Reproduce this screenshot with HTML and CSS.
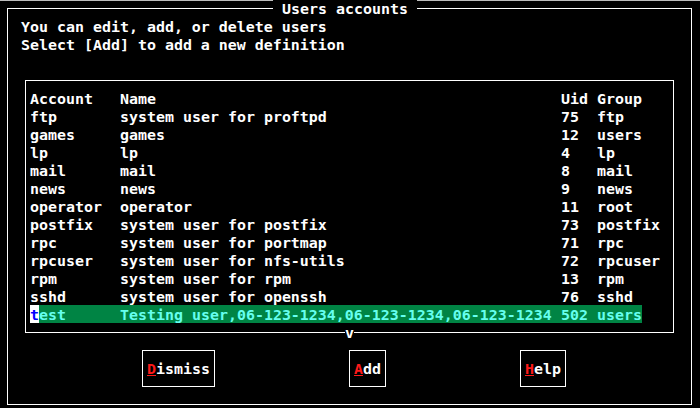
FILE: index.html
```html
<!DOCTYPE html>
<html>
<head>
<meta charset="utf-8">
<link rel="stylesheet" href="styles.css">
</head>
<body>
<div class="screen">
  <div class="frame">
    <div class="title-row"><span class="title"> Users accounts </span></div>
    <div class="intro">
      <div class="line">You can edit, add, or delete users</div>
      <div class="line">Select [Add] to add a new definition</div>
    </div>
    <div class="list-box">
      <div class="row"><span>Account</span><span>Name</span><span>Uid</span><span>Group</span></div>
      <div class="row"><span>ftp</span><span>system user for proftpd</span><span>75</span><span>ftp</span></div>
      <div class="row"><span>games</span><span>games</span><span>12</span><span>users</span></div>
      <div class="row"><span>lp</span><span>lp</span><span>4</span><span>lp</span></div>
      <div class="row"><span>mail</span><span>mail</span><span>8</span><span>mail</span></div>
      <div class="row"><span>news</span><span>news</span><span>9</span><span>news</span></div>
      <div class="row"><span>operator</span><span>operator</span><span>11</span><span>root</span></div>
      <div class="row"><span>postfix</span><span>system user for postfix</span><span>73</span><span>postfix</span></div>
      <div class="row"><span>rpc</span><span>system user for portmap</span><span>71</span><span>rpc</span></div>
      <div class="row"><span>rpcuser</span><span>system user for nfs-utils</span><span>72</span><span>rpcuser</span></div>
      <div class="row"><span>rpm</span><span>system user for rpm</span><span>13</span><span>rpm</span></div>
      <div class="row"><span>sshd</span><span>system user for openssh</span><span>76</span><span>sshd</span></div>
      <div class="row sel"><span><span class="cursor">t</span>est</span><span>Testing user,06-123-1234,06-123-1234,06-123-1234</span><span>502</span><span>users</span></div>
      <span class="more">v</span>
    </div>
    <div class="buttons">
      <div class="btn"><span class="key">D</span>ismiss</div>
      <div class="btn"><span class="key">A</span>dd</div>
      <div class="btn"><span class="key">H</span>elp</div>
    </div>
  </div>
</div>
</body>
</html>
```

FILE: styles.css
```css
html, body {
  margin: 0;
  padding: 0;
  background: #000;
}

body {
  width: 700px;
  height: 408px;
  overflow: hidden;
  color: #ffffff;
  font-family: "DejaVu Sans Mono", "Liberation Mono", monospace;
  font-weight: bold;
  font-size: 14.95px;
}

.screen {
  border-top: 1px solid #bcbcbc;
  padding: 7px 0 0 7px;
}

.frame {
  box-sizing: border-box;
  width: 685px;
  height: 397px;
  border: 1px solid #ffffff;
}

.title-row {
  height: 18px;
  line-height: 20px;
  margin-top: -10px;
  padding-left: 265px;
  white-space: pre;
}

.title {
  display: inline-block;
  height: 18px;
  vertical-align: top;
  background: #000;
}

.intro {
  margin-left: 13px;
}

.line {
  height: 18px;
  line-height: 20px;
  white-space: pre;
}

.list-box {
  position: relative;
  box-sizing: border-box;
  width: 649px;
  height: 253px;
  margin: 27px 0 0 17px;
  padding: 8px 4px 9px;
  border: 1px solid #ffffff;
}

.row {
  display: grid;
  grid-template-columns: 90px 441px 36px auto;
  height: 18px;
  line-height: 20px;
  white-space: pre;
}

.row.sel {
  width: 612px;
  background: #008444;
  color: #66ffee;
}

.cursor {
  display: inline-block;
  width: 9px;
  height: 18px;
  vertical-align: top;
  background: #ffffff;
  color: #0000ff;
}

.more {
  position: absolute;
  left: 319px;
  top: 242px;
  width: 9px;
  height: 18px;
  line-height: 20px;
  background: #000;
  text-align: center;
}

.buttons {
  display: flex;
  gap: 134px;
  margin-top: 17px;
  padding-left: 134px;
}

.btn {
  height: 18px;
  line-height: 20px;
  padding: 8px 4px 9px;
  border: 1px solid #ffffff;
  white-space: pre;
}

.key {
  color: #ff1a1a;
  text-decoration: underline;
  text-decoration-color: #ff1a1a;
  text-decoration-thickness: 1px;
  text-underline-offset: 1px;
}
```
